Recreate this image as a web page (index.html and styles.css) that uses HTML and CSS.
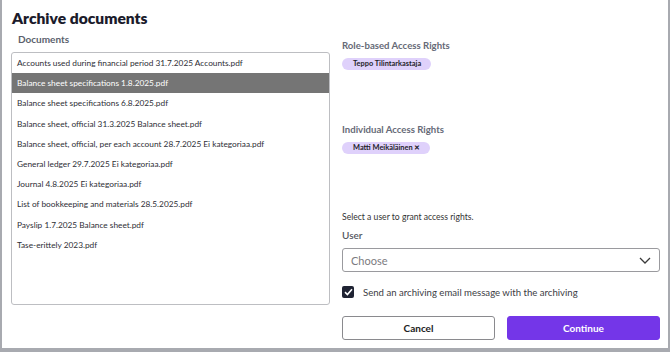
FILE: index.html
```html
<!DOCTYPE html>
<html>
<head>
<meta charset="utf-8">
<link rel="stylesheet" href="styles.css">
</head>
<body>
<div class="modal">
  <h1 class="title">Archive documents</h1>
  <div class="content">
    <div class="left">
      <div class="label">Documents</div>
      <ul class="list">
        <li>Accounts used during financial period 31.7.2025 Accounts.pdf</li>
        <li class="selected">Balance sheet specifications 1.8.2025.pdf</li>
        <li>Balance sheet specifications 6.8.2025.pdf</li>
        <li>Balance sheet, official 31.3.2025 Balance sheet.pdf</li>
        <li>Balance sheet, official, per each account 28.7.2025 Ei kategoriaa.pdf</li>
        <li>General ledger 29.7.2025 Ei kategoriaa.pdf</li>
        <li>Journal 4.8.2025 Ei kategoriaa.pdf</li>
        <li>List of bookkeeping and materials 28.5.2025.pdf</li>
        <li>Payslip 1.7.2025 Balance sheet.pdf</li>
        <li>Tase-erittely 2023.pdf</li>
      </ul>
    </div>
    <div class="right">
      <div class="label section-label">Role-based Access Rights</div>
      <div class="chips"><span class="chip">Teppo Tilintarkastaja</span></div>
      <div class="label section-label second">Individual Access Rights</div>
      <div class="chips"><span class="chip">Matti Meikäläinen ✕</span></div>
      <div class="hint">Select a user to grant access rights.</div>
      <div class="user-label">User</div>
      <div class="select">
        <span class="placeholder">Choose</span>
        <svg class="chevron" width="12" height="7" viewBox="0 0 12 7"><polyline points="1,1 6,6 11,1" fill="none" stroke="#3a3a3a" stroke-width="1.3"/></svg>
      </div>
      <label class="check-row">
        <span class="checkbox"><svg width="9" height="8" viewBox="0 0 9 8"><polyline points="1,4.2 3.4,6.5 8,1.3" fill="none" stroke="#fff" stroke-width="1.6"/></svg></span>
        <span class="check-text">Send an archiving email message with the archiving</span>
      </label>
      <div class="buttons">
        <button class="btn cancel">Cancel</button>
        <button class="btn continue">Continue</button>
      </div>
    </div>
  </div>
</div>
</body>
</html>
```

FILE: styles.css
```css
html, body {
  margin: 0;
  padding: 0;
}
body {
  background: #a8aab0;
  width: 670px;
  height: 352px;
  overflow: hidden;
  font-family: Lato, "Noto Sans", sans-serif;
}
.modal {
  margin-left: 2px;
  width: 666px;
  height: 348px;
  background: #fff;
  box-sizing: border-box;
  padding: 7px 9px 0 9px;
}
.title {
  margin: 0 0 0 1px;
  font-size: 15.6px;
  line-height: 22px;
  font-weight: 800;
  color: #1b1b2b;
}
.content {
  display: flex;
  gap: 12px;
}
.left {
  width: 319px;
  flex: none;
}
.label {
  font-size: 10px;
  font-weight: 700;
  color: #5b5f6d;
  line-height: 14px;
}
.left .label {
  padding-left: 7px;
  margin-top: 3px;
}
.list {
  list-style: none;
  margin: 6px 0 0 0;
  padding: 0;
  height: 253px;
  box-sizing: border-box;
  border: 1px solid #bdbec2;
  border-radius: 3px;
}
.list li {
  height: 20.2px;
  line-height: 20.2px;
  padding-left: 5px;
  font-size: 8.3px;
  color: #2e2e35;
  white-space: nowrap;
}
.list li.selected {
  background: #757575;
  color: #fff;
}
.right {
  flex: 1;
  display: flex;
  flex-direction: column;
  align-items: flex-start;
}
.section-label {
  font-size: 9.6px;
  font-weight: 700;
  color: #666a77;
  margin-top: 10px;
}
.section-label.second {
  margin-top: 53px;
}
.chips {
  margin-top: 5px;
  display: flex;
}
.chip {
  background: #dfd1fb;
  border-radius: 6px;
  font-size: 7.4px;
  font-weight: 700;
  color: #1e1e2a;
  line-height: 12px;
  padding: 0 10px 0 11px;
}
.hint {
  margin-top: 57px;
  font-size: 8.6px;
  color: #333;
  line-height: 12px;
}
.user-label {
  margin-top: 5px;
  font-size: 10px;
  font-weight: 600;
  color: #55585f;
  line-height: 14px;
}
.select {
  margin-top: 6px;
  width: 318px;
  height: 24px;
  box-sizing: border-box;
  border: 1px solid #9a9a9e;
  border-radius: 3px;
  display: flex;
  align-items: center;
  justify-content: space-between;
  padding: 0 8px 0 8px;
}
.placeholder {
  font-size: 11px;
  color: #7b7b80;
}
.chevron {
  display: block;
}
.check-row {
  margin-top: 14px;
  display: flex;
  align-items: center;
  gap: 9px;
}
.checkbox {
  width: 12px;
  height: 12px;
  background: #1f2333;
  border-radius: 2px;
  display: flex;
  align-items: center;
  justify-content: center;
}
.checkbox svg {
  display: block;
}
.check-text {
  font-size: 9.6px;
  color: #3c3c44;
}
.buttons {
  margin-top: 18px;
  display: flex;
  gap: 12px;
  width: 318px;
}
.btn {
  flex: 1;
  height: 24px;
  border-radius: 3px;
  font-family: inherit;
  font-size: 10px;
  font-weight: 700;
  cursor: pointer;
}
.cancel {
  background: #fff;
  border: 1px solid #8a8a8e;
  color: #222;
}
.continue {
  background: #7436e8;
  border: 1px solid #7436e8;
  color: #fff;
}
```
